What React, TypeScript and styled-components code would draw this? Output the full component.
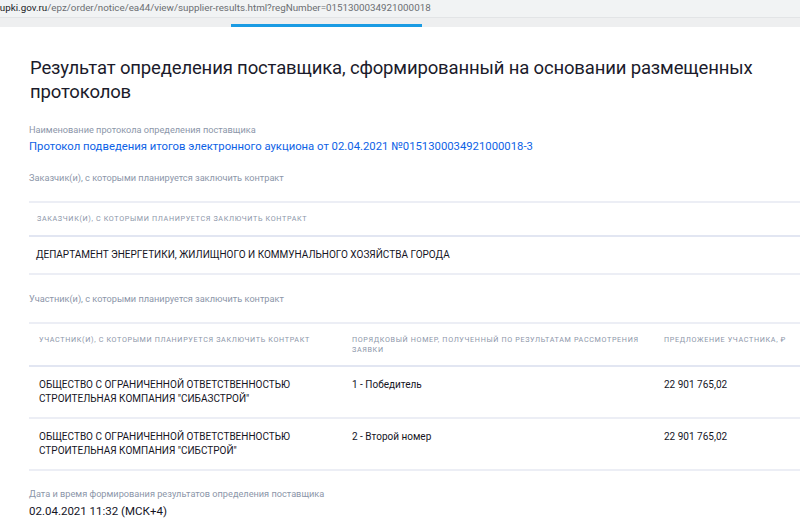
import styled, { createGlobalStyle } from "styled-components";

const GlobalStyle = createGlobalStyle`
  html, body {
    margin: 0;
    padding: 0;
    background: #ffffff;
    font-family: Roboto, "Noto Sans", "Liberation Sans", sans-serif;
    overflow: hidden;
  }
`;

type Participant = {
  name: string[];
  place: string;
  offer: string;
};

const participants: Participant[] = [
  {
    name: ["ОБЩЕСТВО С ОГРАНИЧЕННОЙ ОТВЕТСТВЕННОСТЬЮ", 'СТРОИТЕЛЬНАЯ КОМПАНИЯ "СИБАЗСТРОЙ"'],
    place: "1 - Победитель",
    offer: "22 901 765,02",
  },
  {
    name: ["ОБЩЕСТВО С ОГРАНИЧЕННОЙ ОТВЕТСТВЕННОСТЬЮ", 'СТРОИТЕЛЬНАЯ КОМПАНИЯ "СИБСТРОЙ"'],
    place: "2 - Второй номер",
    offer: "22 901 765,02",
  },
];

const PARTICIPANT_COLS = "313px 312px 1fr";

const App = () => {
  return (
    <Page>
      <GlobalStyle />
      <AddressBar>
        <Domain>zupki.gov.ru</Domain>
        <Path>/epz/order/notice/ea44/view/supplier-results.html?regNumber=0151300034921000018</Path>
      </AddressBar>
      <TabStrip>
        <ActiveTab />
      </TabStrip>

      <Content>
        <Title>
          Результат определения поставщика, сформированный на основании размещенных протоколов
        </Title>

        <Field>
          <Label>Наименование протокола определения поставщика</Label>
          <Link>Протокол подведения итогов электронного аукциона от 02.04.2021 №0151300034921000018-3</Link>
        </Field>

        <SectionLabel>Заказчик(и), с которыми планируется заключить контракт</SectionLabel>
        <Table>
          <HeadRow $cols="1fr" $inset={8}>
            <HeadCell>Заказчик(и), с которыми планируется заключить контракт</HeadCell>
          </HeadRow>
          <BodyRow $cols="1fr" $inset={7}>
            <Cell>ДЕПАРТАМЕНТ ЭНЕРГЕТИКИ, ЖИЛИЩНОГО И КОММУНАЛЬНОГО ХОЗЯЙСТВА ГОРОДА</Cell>
          </BodyRow>
        </Table>

        <SectionLabel>Участник(и), с которыми планируется заключить контракт</SectionLabel>
        <Table>
          <HeadRow $cols={PARTICIPANT_COLS} $inset={10}>
            <HeadCell>Участник(и), с которыми планируется заключить контракт</HeadCell>
            <HeadCell>Порядковый номер, полученный по результатам рассмотрения заявки</HeadCell>
            <HeadCell $nowrap>Предложение участника, ₽</HeadCell>
          </HeadRow>
          {participants.map((p, i) => (
            <BodyRow key={i} $cols={PARTICIPANT_COLS} $inset={10}>
              <Cell>
                {p.name[0]}
                <br />
                {p.name[1]}
              </Cell>
              <Cell>{p.place}</Cell>
              <Cell>{p.offer}</Cell>
            </BodyRow>
          ))}
        </Table>

        <Field>
          <Label>Дата и время формирования результатов определения поставщика</Label>
          <Value>02.04.2021 11:32 (МСК+4)</Value>
        </Field>
      </Content>
    </Page>
  );
};

export default App;

// стили
const Page = styled.div`
  width: 800px;
  height: 521px;
  overflow: hidden;
  background: #fff;
`;

const AddressBar = styled.div`
  height: 17px;
  line-height: 16px;
  background: #f1f3f4;
  font-size: 9.8px;
  white-space: nowrap;
  margin-left: -5px;
`;

const Domain = styled.span`
  color: #202124;
`;

const Path = styled.span`
  color: #6b6e72;
`;

const TabStrip = styled.div`
  height: 10px;
  background: #eeeff0;
  border-top: 1px solid #e2e4e6;
  box-sizing: border-box;
  position: relative;
`;

const ActiveTab = styled.div`
  position: absolute;
  left: 231px;
  bottom: 0;
  width: 191px;
  height: 3px;
  background: #1a9be3;
`;

const Content = styled.div`
  padding: 29px 0 0 29px;
`;

const Title = styled.h1`
  margin: 0 0 19px 1px;
  font-size: 18.5px;
  font-weight: 400;
  line-height: 24px;
  letter-spacing: -0.15px;
  color: #1b1b2b;
  max-width: 740px;
`;

const Field = styled.div`
  display: flex;
  flex-direction: column;
  gap: 4px;
`;

const Label = styled.div`
  font-size: 9.2px;
  line-height: 13px;
  color: #8c96a9;
`;

const Link = styled.div`
  font-size: 11.3px;
  line-height: 14px;
  color: #0d62e6;
`;

const Value = styled.div`
  font-size: 11.5px;
  line-height: 14px;
  color: #15151f;
`;

const SectionLabel = styled(Label)`
  margin-top: 17px;
`;

const Table = styled.div`
  margin-top: 17px;
  margin-bottom: 16px;
  border-top: 2px solid #eceef5;
`;

const HeadRow = styled.div<{ $cols: string; $inset: number }>`
  display: grid;
  grid-template-columns: ${({ $cols }) => $cols};
  padding: 11px 0 10.5px ${({ $inset }) => $inset}px;
  border-bottom: 2px solid #e2e6f2;
`;

const HeadCell = styled.div<{ $nowrap?: boolean }>`
  font-size: 7.2px;
  line-height: 10px;
  letter-spacing: 0.65px;
  text-transform: uppercase;
  color: #8c96a9;
  padding-right: ${({ $nowrap }) => ($nowrap ? "0" : "20px")};
  white-space: ${({ $nowrap }) => ($nowrap ? "nowrap" : "normal")};
`;

const BodyRow = styled.div<{ $cols: string; $inset: number }>`
  display: grid;
  grid-template-columns: ${({ $cols }) => $cols};
  padding: 11px 0 11px ${({ $inset }) => $inset}px;
  border-bottom: 2px solid #eceef5;
`;

const Cell = styled.div`
  font-size: 10px;
  line-height: 14px;
  color: #15151f;
`;
